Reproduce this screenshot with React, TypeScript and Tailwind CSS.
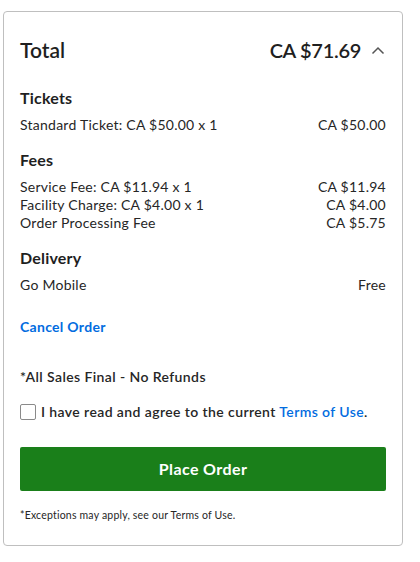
import React from "react";

const Row = ({ l, r }: { l: string; r: string }) => (
  <div className="flex justify-between text-[14px] leading-[18px] tracking-[0.25px] text-[#262626]">
    <span>{l}</span>
    <span>{r}</span>
  </div>
);

export default function App() {
  return (
    <div className="bg-white w-[420px] h-[562px] pt-[11px] pl-[3px]" style={{ fontFamily: "Lato, 'Open Sans', sans-serif" }}>
      <div className="w-[400px] h-[535px] border border-[#bfbfbf] rounded-[4px] px-[16px]">
        <div className="flex items-center justify-between mt-[25px] h-[26px]">
          <span className="text-[21px] font-semibold text-[#1f1f1f]">Total</span>
          <div className="flex items-center gap-[10px]">
            <span className="text-[20px] font-semibold text-[#1f1f1f] tracking-[-0.3px]">CA $71.69</span>
            <svg width="14" height="9" viewBox="0 0 14 9" className="mr-[1px]">
              <path d="M1.5 7.5 L7 2 L12.5 7.5" fill="none" stroke="#555" strokeWidth="1.5" />
            </svg>
          </div>
        </div>
        <div className="mt-[25px] text-[16px] font-bold leading-[20px] text-[#1f1f1f] tracking-[0.2px]">Tickets</div>
        <div className="mt-[8px]"><Row l="Standard Ticket: CA $50.00 x 1" r="CA $50.00" /></div>
        <div className="mt-[16px] text-[16px] font-bold leading-[20px] text-[#1f1f1f] tracking-[0.2px]">Fees</div>
        <div className="mt-[8px]">
          <Row l="Service Fee: CA $11.94 x 1" r="CA $11.94" />
          <Row l="Facility Charge: CA $4.00 x 1" r="CA $4.00" />
          <Row l="Order Processing Fee" r="CA $5.75" />
        </div>
        <div className="mt-[16px] text-[16px] font-bold leading-[20px] text-[#1f1f1f] tracking-[0.2px]">Delivery</div>
        <div className="mt-[8px]"><Row l="Go Mobile" r="Free" /></div>
        <div className="mt-[24px] text-[14px] font-bold leading-[18px] tracking-[0.3px] text-[#026cdf]">Cancel Order</div>
        <div className="mt-[32px] text-[14px] font-semibold leading-[18px] tracking-[0.4px] text-[#262626]">*All Sales Final - No Refunds</div>
        <div className="mt-[17px] flex items-center gap-[5px]">
          <div className="w-[16px] h-[16px] border border-[#8a8a8a] rounded-[2px] bg-white" />
          <span className="text-[14px] font-semibold leading-[18px] tracking-[0.4px] text-[#262626]">
            I have read and agree to the current <span className="text-[#026cdf]">Terms of Use</span>.
          </span>
        </div>
        <button className="mt-[26px] w-full h-[44px] bg-[#1a7f1a] rounded-[2px] text-white text-[16px] font-bold tracking-[0.4px]">Place Order</button>
        <div className="mt-[17px] text-[10.5px] leading-[14px] tracking-[0.2px] text-[#262626]">*Exceptions may apply, see our Terms of Use.</div>
      </div>
    </div>
  );
}
